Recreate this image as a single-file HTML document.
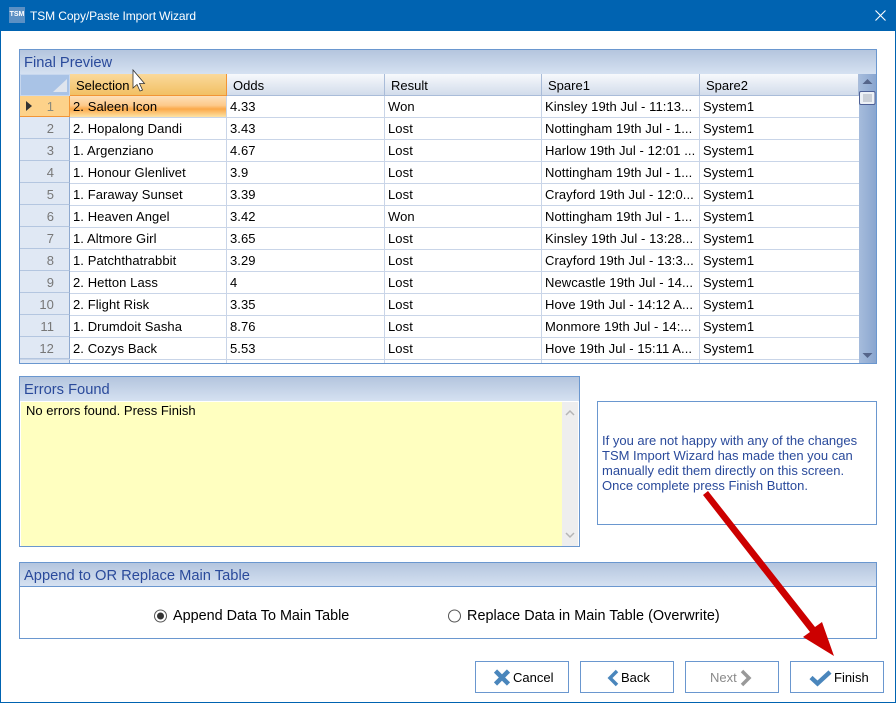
<!DOCTYPE html>
<html><head><meta charset="utf-8"><style>
*{box-sizing:border-box}
html,body{margin:0;padding:0;background:#fff}
body{width:896px;height:703px;position:relative;overflow:hidden;font-family:"Liberation Sans",Arial,sans-serif;font-size:13px;color:#000}
.a{position:absolute;white-space:nowrap}
.hd{background:linear-gradient(#b4c5de,#d5e1f1);color:#2a4a9b;font-size:14.700px;padding-left:4px;line-height:26px}
.box{border:1px solid #6a97cf}
.col{position:absolute;top:74px;height:22px;background:linear-gradient(#f7f9fc,#d2dceb);border-right:1px solid #a9bcd9;border-bottom:1px solid #a9bcd9;padding-left:6px;line-height:23px}
.r{position:absolute;left:20px;width:839px;height:22px;border-bottom:1px solid #c9d5e8;line-height:21px;letter-spacing:.08px}
.r span{position:absolute;top:0;height:21px;overflow:hidden}
.r .n{left:0;width:50px;height:22px;margin-top:-1px;padding-top:1px;background:#e0e8f4;color:#777;text-align:right;padding-right:15px;border-right:1px solid #8fa9cf;border-bottom:1px solid #b4c6e0;font-size:13px}
.r .s{left:53px;width:154px}.r .o{left:210px}.r .e{left:368px}.r .p{left:525px}.r .y{left:683px}
.v{position:absolute;top:96px;width:1px;height:267px;background:#c9d5e8}
.btn{position:absolute;top:661px;width:94px;height:32px;border:1px solid #6a97cf;background:#fff;line-height:31px}
</style></head><body>
<div class="a" style="left:0;top:0;width:896px;height:703px;border:1px solid #0063b1;border-width:0 1px 1px 1px"></div>
<div class="a" style="left:0;top:0;width:896px;height:31px;background:#0063b1"></div>
<div class="a" style="left:9px;top:7px;width:16px;height:16px;background:#5b90c4;color:#fff;font-size:7px;font-weight:bold;line-height:16px;text-align:center">TSM</div>
<div class="a" style="left:30px;top:8px;color:#fff;font-size:12px;line-height:16px;letter-spacing:-.1px">TSM Copy/Paste Import Wizard</div>
<svg class="a" style="left:874px;top:9px" width="13" height="13"><path d="M1.500 1.500 11.500 11.500M11.500 1.500 1.500 11.500" stroke="#fff" stroke-width="1.100"/></svg>

<div class="a box" style="left:19px;top:49px;width:858px;height:315px"></div>
<div class="a hd" style="left:20px;top:50px;width:856px;height:24px">Final Preview</div>
<div class="a" style="left:20px;top:74px;width:50px;height:22px;background:#a9c3e6;border:1px solid #c7d7ee"></div>
<svg class="a" style="left:52px;top:78px" width="16" height="15"><path d="M15 1V14H1Z" fill="#dfe5ee"/></svg>
<div class="col" style="left:70px;width:157px;background:linear-gradient(#fad99b,#f2c064);border-right:1px solid #f29536;border-bottom:1px solid #f29536">Selection</div>
<div class="col" style="left:227px;width:158px">Odds</div>
<div class="col" style="left:385px;width:157px">Result</div>
<div class="col" style="left:542px;width:158px">Spare1</div>
<div class="col" style="left:700px;width:159px">Spare2</div>

<div class="r" style="top:96px"><span class="n" style="background:#fdd28a;border-color:#f29536;color:#8a8a7a;margin-top:0;padding-top:0;height:21px">1</span><span class="s" style="left:50px;width:157px;padding-left:3px;background:linear-gradient(#fde0ba,#fdc98a 45%,#fba94a 62%,#fde3a5)">2. Saleen Icon</span><span class="o">4.33</span><span class="e">Won</span><span class="p">Kinsley 19th Jul - 11:13...</span><span class="y">System1</span></div>
<svg class="a" style="left:25px;top:100px" width="8" height="12"><path d="M1 1 7 6 1 11Z" fill="#333"/></svg>
<div class="r" style="top:118px"><span class="n">2</span><span class="s">2. Hopalong Dandi</span><span class="o">3.43</span><span class="e">Lost</span><span class="p">Nottingham 19th Jul - 1...</span><span class="y">System1</span></div>
<div class="r" style="top:140px"><span class="n">3</span><span class="s">1. Argenziano</span><span class="o">4.67</span><span class="e">Lost</span><span class="p">Harlow 19th Jul - 12:01 ...</span><span class="y">System1</span></div>
<div class="r" style="top:162px"><span class="n">4</span><span class="s">1. Honour Glenlivet</span><span class="o">3.9</span><span class="e">Lost</span><span class="p">Nottingham 19th Jul - 1...</span><span class="y">System1</span></div>
<div class="r" style="top:184px"><span class="n">5</span><span class="s">1. Faraway Sunset</span><span class="o">3.39</span><span class="e">Lost</span><span class="p">Crayford 19th Jul - 12:0...</span><span class="y">System1</span></div>
<div class="r" style="top:206px"><span class="n">6</span><span class="s">1. Heaven Angel</span><span class="o">3.42</span><span class="e">Won</span><span class="p">Nottingham 19th Jul - 1...</span><span class="y">System1</span></div>
<div class="r" style="top:228px"><span class="n">7</span><span class="s">1. Altmore Girl</span><span class="o">3.65</span><span class="e">Lost</span><span class="p">Kinsley 19th Jul - 13:28...</span><span class="y">System1</span></div>
<div class="r" style="top:250px"><span class="n">8</span><span class="s">1. Patchthatrabbit</span><span class="o">3.29</span><span class="e">Lost</span><span class="p">Crayford 19th Jul - 13:3...</span><span class="y">System1</span></div>
<div class="r" style="top:272px"><span class="n">9</span><span class="s">2. Hetton Lass</span><span class="o">4</span><span class="e">Lost</span><span class="p">Newcastle 19th Jul - 14...</span><span class="y">System1</span></div>
<div class="r" style="top:294px"><span class="n">10</span><span class="s">2. Flight Risk</span><span class="o">3.35</span><span class="e">Lost</span><span class="p">Hove 19th Jul - 14:12 A...</span><span class="y">System1</span></div>
<div class="r" style="top:316px"><span class="n">11</span><span class="s">1. Drumdoit Sasha</span><span class="o">8.76</span><span class="e">Lost</span><span class="p">Monmore 19th Jul - 14:...</span><span class="y">System1</span></div>
<div class="r" style="top:338px"><span class="n">12</span><span class="s">2. Cozys Back</span><span class="o">5.53</span><span class="e">Lost</span><span class="p">Hove 19th Jul - 15:11 A...</span><span class="y">System1</span></div>
<div class="a" style="left:20px;top:360px;width:50px;height:3px;background:#e0e8f4;border-right:1px solid #8fa9cf"></div>
<div class="v" style="left:226px"></div><div class="v" style="left:384px"></div><div class="v" style="left:541px"></div><div class="v" style="left:699px"></div>

<div class="a" style="left:859px;top:74px;width:17px;height:289px;background:linear-gradient(90deg,#a6bcdc,#8aa6cf)"></div>
<svg class="a" style="left:859px;top:74px" width="17" height="40"><path d="M3.500 10 8.500 5 13.500 10Z" fill="#55658a"/><rect x="0.500" y="17.500" width="15.500" height="13" rx="1.500" fill="#edf1f6" stroke="#4d5f95"/><path d="M4 21H13M4 23H13M4 25H13M4 27H13" stroke="#a8adb8"/></svg>
<svg class="a" style="left:859px;top:350px" width="17" height="12"><path d="M3.500 3H13.500L8.500 8Z" fill="#55658a"/></svg>

<div class="a box" style="left:19px;top:376px;width:561px;height:171px"></div>
<div class="a hd" style="left:20px;top:377px;width:559px;height:24px">Errors Found</div>
<div class="a" style="left:21px;top:402px;width:541px;height:144px;background:#ffffc0;padding:1px 0 0 5px;line-height:15px;letter-spacing:.02px">No errors found. Press Finish</div>
<div class="a" style="left:562px;top:402px;width:16px;height:144px;background:#eeeeee"></div>
<svg class="a" style="left:562px;top:404px" width="16" height="140"><path d="M4 11 8 7 12 11" fill="none" stroke="#b5b5b5" stroke-width="1.500"/><path d="M4 129 8 133 12 129" fill="none" stroke="#b5b5b5" stroke-width="1.500"/></svg>

<div class="a box" style="left:597px;top:401px;width:280px;height:124px"></div>
<div class="a" style="left:602px;top:433px;color:#2a4a9b;line-height:15px">If you are not happy with any of the changes<br>TSM Import Wizard has made then you can<br>manually edit them directly on this screen.<br>Once complete press Finish Button.</div>

<div class="a box" style="left:19px;top:562px;width:858px;height:77px"></div>
<div class="a hd" style="left:20px;top:563px;width:856px;height:23px;overflow:hidden">Append to OR Replace Main Table</div>
<div class="a" style="left:20px;top:586px;width:856px;height:1px;background:#6a97cf"></div>
<svg class="a" style="left:153px;top:608px" width="16" height="16"><circle cx="7.500" cy="8" r="6" fill="#fff" stroke="#555"/><circle cx="7.500" cy="8" r="3.500" fill="#333"/></svg>
<div class="a" style="left:173px;top:608px;font-size:14.400px;line-height:16px">Append Data To Main Table</div>
<svg class="a" style="left:447px;top:608px" width="16" height="16"><circle cx="7.500" cy="8" r="6" fill="#fff" stroke="#555"/></svg>
<div class="a" style="left:467px;top:608px;font-size:14.400px;line-height:16px;letter-spacing:.05px">Replace Data in Main Table (Overwrite)</div>

<div class="btn" style="left:475px"><span class="a" style="left:37px;top:0">Cancel</span><svg class="a" style="left:17px;top:6px" width="18" height="20"><path d="M2.500 3 15.500 16M15.500 3 2.500 16" stroke="#4a86bc" stroke-width="4.500"/></svg></div>
<div class="btn" style="left:580px"><span class="a" style="left:40px;top:0">Back</span><svg class="a" style="left:26px;top:7px" width="12" height="18"><path d="M10 2 3 9 10 16" fill="none" stroke="#4a86bc" stroke-width="3.500"/></svg></div>
<div class="btn" style="left:685px;color:#8a8a8a"><span class="a" style="left:24px;top:0">Next</span><svg class="a" style="left:54px;top:7px" width="12" height="18"><path d="M2 2 9 9 2 16" fill="none" stroke="#999" stroke-width="3.500"/></svg></div>
<div class="btn" style="left:790px"><span class="a" style="left:43px;top:0">Finish</span><svg class="a" style="left:18px;top:7px" width="23" height="18"><path d="M2 8.500 8.500 14.500 21 3" fill="none" stroke="#4a86bc" stroke-width="4.500"/></svg></div>

<svg class="a" style="left:0;top:0;pointer-events:none" width="896" height="703"><path d="M703 495 708 491 815 627 822 622 834 656 803 637 810 632Z" fill="#cc0000"/>
<path d="M133 70V88L137 84.500 140 91 142.500 90 139.500 83.500H144.500Z" fill="#fff" stroke="#333" stroke-width="0.800"/></svg>
</body></html>
